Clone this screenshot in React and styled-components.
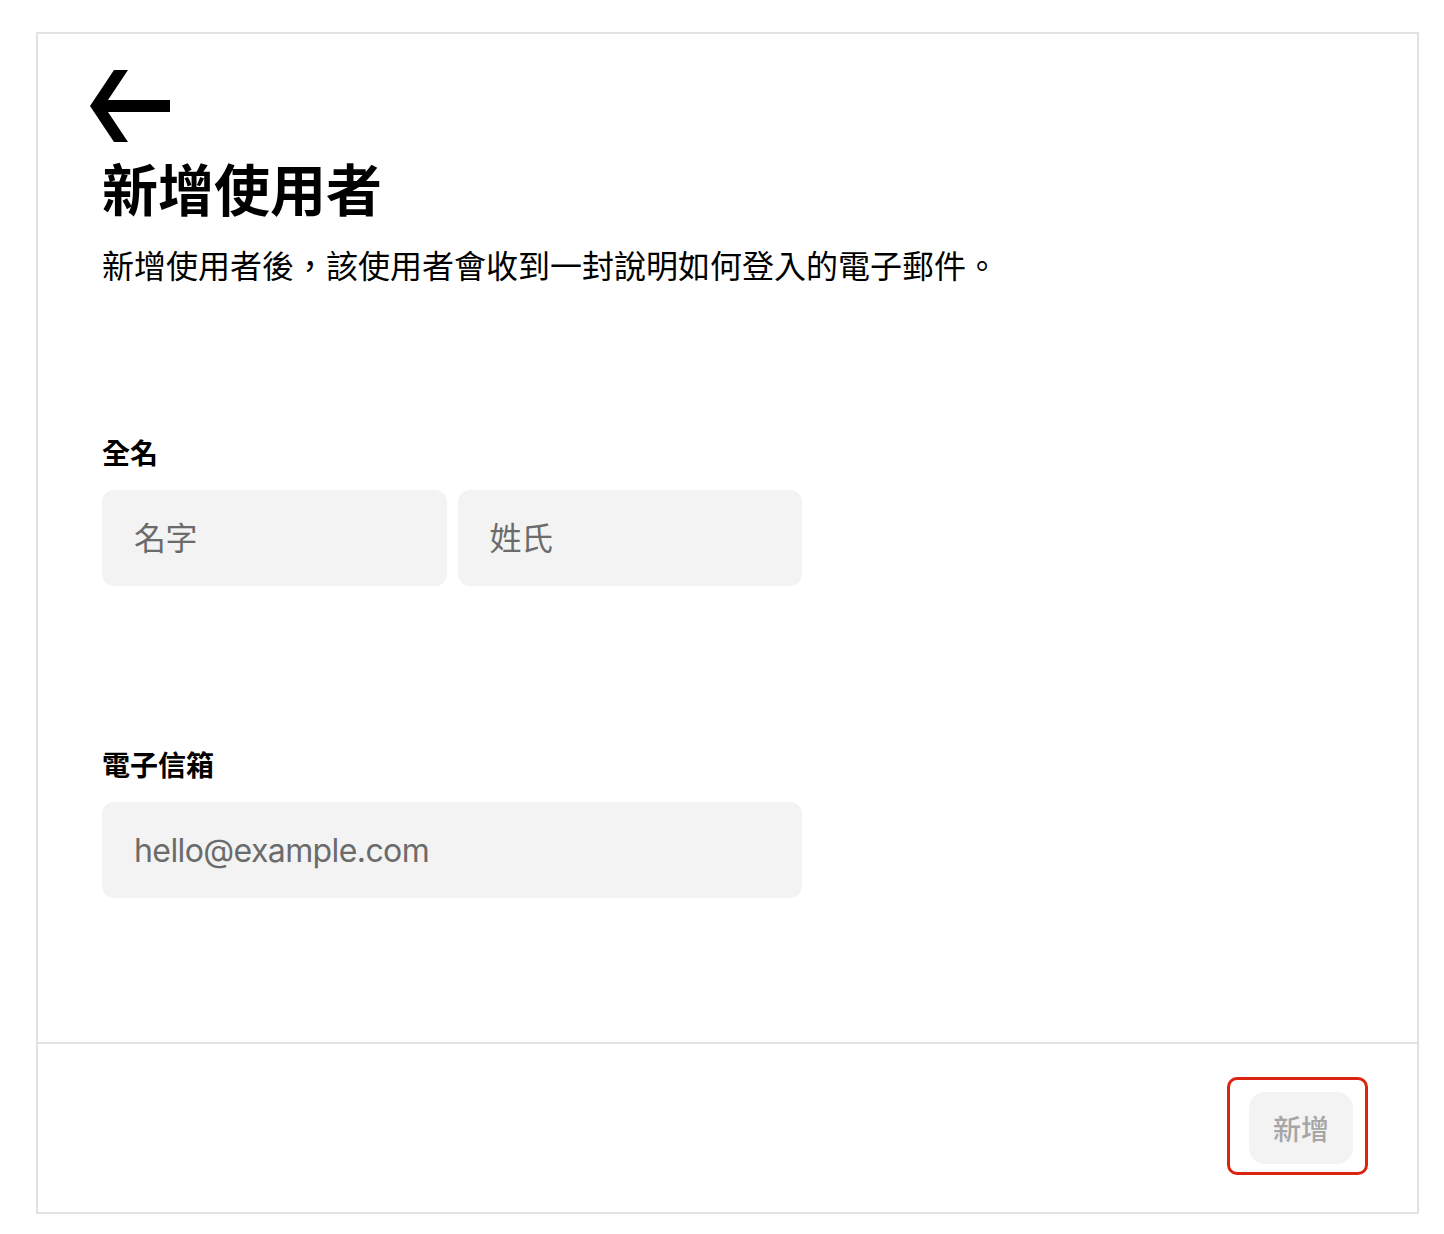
import styled, { createGlobalStyle } from "styled-components";

const GlobalStyle = createGlobalStyle`
  * { box-sizing: border-box; }
  body {
    margin: 0;
    background: #ffffff;
    font-family: Inter, "Noto Sans CJK TC", sans-serif;
    color: #000000;
  }
`;

const Page = styled.div`
  padding: 32px 0 20px 36px;
`;

const Card = styled.div`
  width: 1383px;
  height: 1182px;
  border: 2px solid #e2e2e2;
  display: flex;
  flex-direction: column;
`;

const Content = styled.div`
  flex: 1;
  padding: 36px 64px 0 64px;
  display: flex;
  flex-direction: column;
`;

const BackButton = styled.button`
  width: 80px;
  height: 72px;
  margin-left: -12px;
  padding: 0;
  border: none;
  background: none;
  display: block;
  cursor: pointer;
`;

const Title = styled.h1`
  margin: 13px 0 0;
  font-family: "Noto Sans CJK TC", sans-serif;
  font-size: 56px;
  line-height: 64px;
  font-weight: 700;
`;

const Subtitle = styled.p`
  margin: 23px 0 0;
  font-family: "Noto Sans CJK TC", sans-serif;
  font-size: 32px;
  line-height: 44px;
  font-weight: 400;
`;

const Field = styled.div`
  margin-top: ${(p) => p.$top}px;
  width: 700px;
  display: flex;
  flex-direction: column;
  gap: 20px;
`;

const Label = styled.label`
  font-family: "Noto Sans CJK TC", sans-serif;
  font-size: 28px;
  line-height: 36px;
  font-weight: 700;
`;

const InputRow = styled.div`
  display: grid;
  grid-template-columns: 1fr 1fr;
  gap: 11px;
`;

const Input = styled.input`
  width: 100%;
  height: 96px;
  border: none;
  border-radius: 12px;
  background: #f3f3f3;
  padding: 0 32px;
  font-family: Inter, "Noto Sans CJK TC", sans-serif;
  font-size: 32px;
  letter-spacing: -0.6px;
  color: #000;
  outline: none;
  &::placeholder {
    color: #6b6b6b;
  }
`;

const Footer = styled.div`
  height: 170px;
  border-top: 2px solid #e2e2e2;
  display: flex;
  justify-content: flex-end;
  align-items: flex-start;
  padding: 33px 49px 0 0;
`;

const Highlight = styled.div`
  border: 3px solid #dc2310;
  border-radius: 10px;
  padding: 12px 12px 8px 19px;
`;

const SubmitButton = styled.button`
  width: 104px;
  height: 72px;
  border: none;
  border-radius: 16px;
  background: #f3f3f3;
  color: #a6a6a6;
  font-family: "Noto Sans CJK TC", sans-serif;
  font-size: 28px;
  font-weight: 500;
  display: flex;
  align-items: center;
  justify-content: center;
  padding: 0;
`;

const BackArrow = () => (
  <svg width="80" height="72" viewBox="0 0 80 72">
    <polygon
      points="0,36 24,0 38,0 18,30 80,30 80,42 18,42 38,72 24,72"
      fill="#000"
    />
  </svg>
);

const App = () => {
  return (
    <Page>
      <GlobalStyle />
      <Card>
        <Content>
          <BackButton aria-label="返回">
            <BackArrow />
          </BackButton>
          <Title>新增使用者</Title>
          <Subtitle>
            新增使用者後，該使用者會收到一封說明如何登入的電子郵件。
          </Subtitle>
          <Field $top={148}>
            <Label>全名</Label>
            <InputRow>
              <Input placeholder="名字" />
              <Input placeholder="姓氏" />
            </InputRow>
          </Field>
          <Field $top={160}>
            <Label>電子信箱</Label>
            <Input placeholder="hello@example.com" />
          </Field>
        </Content>
        <Footer>
          <Highlight>
            <SubmitButton>新增</SubmitButton>
          </Highlight>
        </Footer>
      </Card>
    </Page>
  );
};

export default App;
